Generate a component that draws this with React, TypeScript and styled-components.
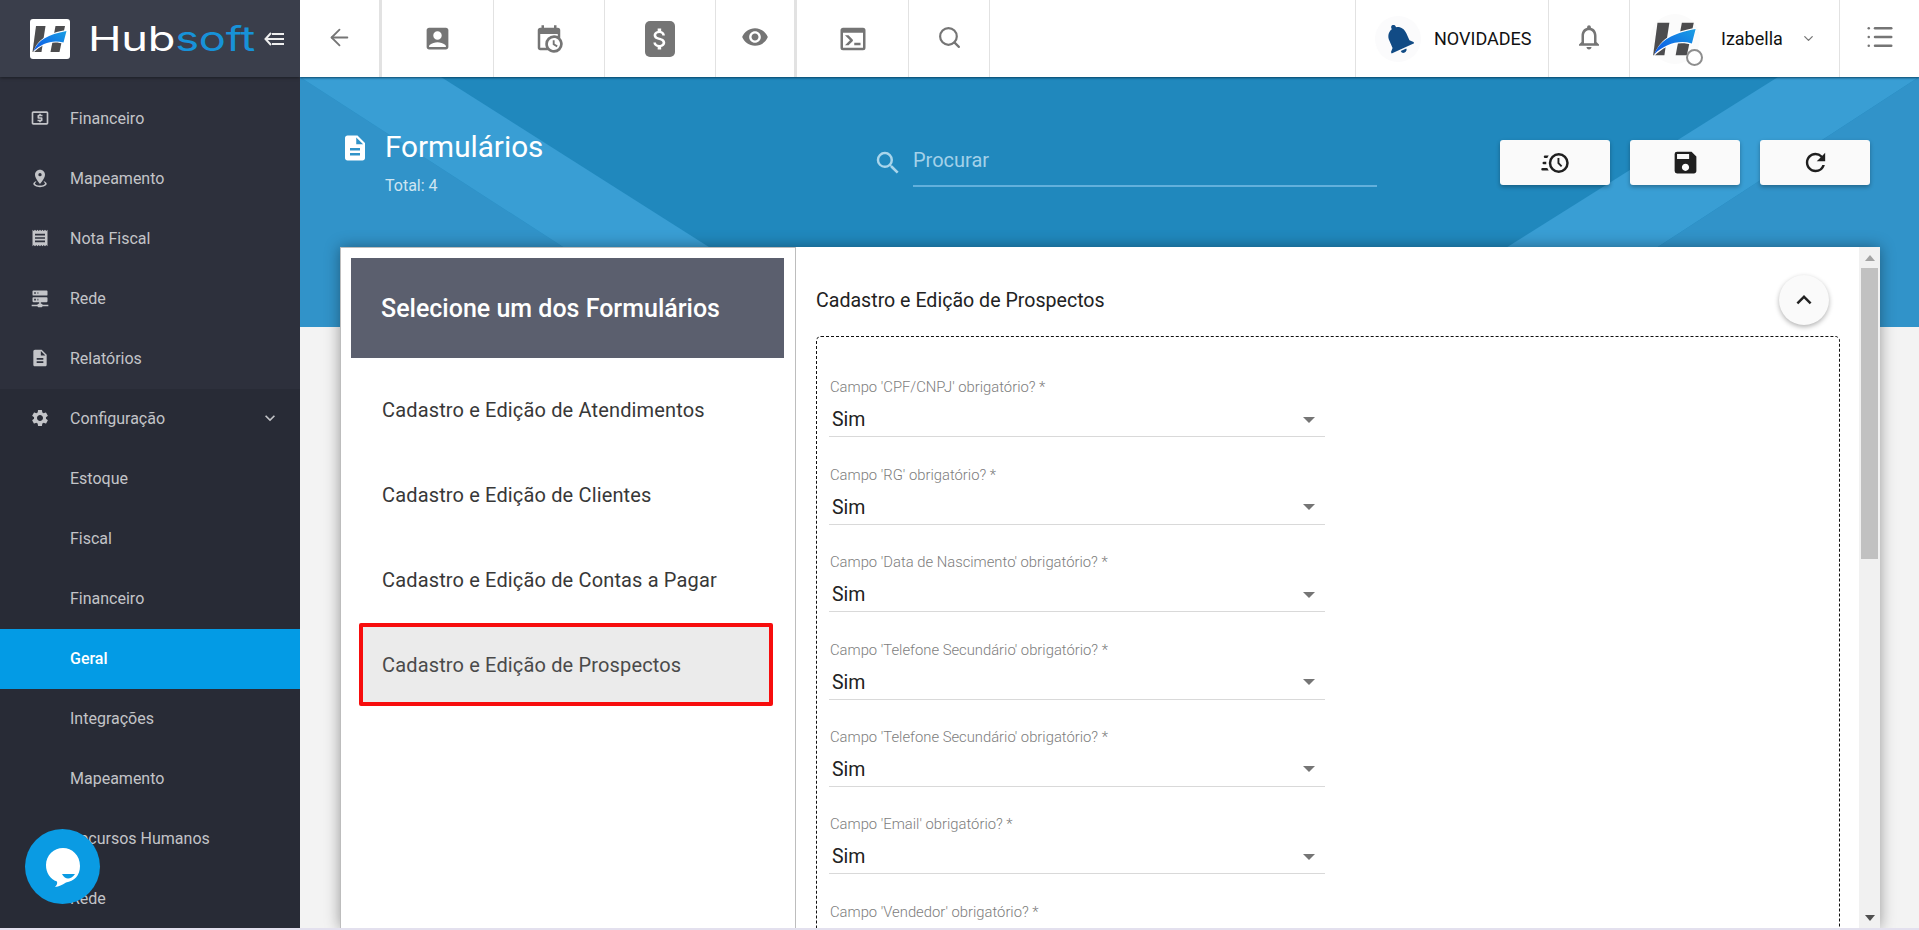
import React from "react";
import styled, { createGlobalStyle } from "styled-components";
import { ArrowLeft, ChevronDown, List, Search } from "lucide-react";
import {
  MdAccountBox,
  MdAttachMoney,
  MdDescription,
  MdExpandMore,
  MdKeyboardArrowUp,
  MdLocalAtm,
  MdNotifications,
  MdOutlineNotifications,
  MdReceipt,
  MdRefresh,
  MdSave,
  MdSearch,
  MdSettings,
  MdVisibility,
} from "react-icons/md";

const GlobalStyle = createGlobalStyle`
  html, body {
    margin: 0;
    height: 100%;
    overflow: hidden;
    background: #e3e0ee;
  }
  * {
    box-sizing: border-box;
  }
  #root {
    height: 928px;
    font-family: "Roboto", "Liberation Sans", sans-serif;
  }
`;

const Page = styled.div`
  display: flex;
  height: 928px;
  overflow: hidden;
  background: #f3f3f3;
`;

const Sidebar = styled.aside`
  width: 300px;
  flex-shrink: 0;
  background: #2d303c;
  overflow: hidden;
  position: relative;
  z-index: 3;
`;

const Brand = styled.div`
  height: 77px;
  background: #3a3e4b;
  box-shadow: 0 1px 3px rgba(0, 0, 0, 0.4);
  display: flex;
  align-items: center;
  padding: 0 0 0 30px;
`;

const LogoBox = styled.div`
  width: 40px;
  height: 40px;
  border-radius: 3px;
  background: #fff;
`;

const Wordmark = styled.div`
  width: 163px;
  margin-left: 18px;
  font-family: "Inter", sans-serif;
  font-size: 34px;
  font-weight: 400;
  line-height: 40px;
  color: #fff;
  white-space: nowrap;
  transform: scaleX(1.33);
  transform-origin: left center;
  letter-spacing: -0.2px;
`;

const WordmarkBlue = styled.span`
  color: #1792d8;
`;

const MenuToggle = styled.svg`
  width: 20px;
  height: 16px;
  margin-left: 13px;
  color: #eee;
`;

const Menu = styled.nav`
  padding-top: 12px;
`;

const SubMenu = styled.div`
  background: #282b36;
`;

const MenuItem = styled.div<{ $active?: boolean }>`
  height: 60px;
  display: flex;
  align-items: center;
  padding: 0 20px 2px 30px;
  font-size: 16px;
  font-weight: ${(p) => (p.$active ? 500 : 400)};
  color: ${(p) => (p.$active ? "#fff" : "#c3c4c8")};
  background: ${(p) => (p.$active ? "#039be5" : "transparent")};
`;

const MenuIcon = styled.span`
  width: 40px;
  display: flex;
  font-size: 20px;
  color: #c3c4c8;
`;

const MenuIndent = styled.span`
  width: 40px;
`;

const MenuChevron = styled.span`
  margin-left: auto;
  display: flex;
  font-size: 20px;
  color: #c3c4c8;
`;

const ChatButton = styled.div`
  position: absolute;
  left: 25px;
  top: 829px;
  width: 75px;
  height: 75px;
  border-radius: 50%;
  background: #0a9be3;
  display: flex;
  align-items: center;
  justify-content: center;
`;

const Main = styled.main`
  flex: 1;
  min-width: 0;
  display: flex;
  flex-direction: column;
  overflow: hidden;
`;

const TopBar = styled.header`
  height: 77px;
  flex-shrink: 0;
  display: flex;
  background: #fff;
  box-shadow: 0 1px 2px rgba(0, 50, 80, 0.8);
  position: relative;
  z-index: 2;
`;

const TopCell = styled.div<{ $width: number; $thick?: boolean; $pad?: number; $lift?: boolean; $last?: boolean }>`
  width: ${(p) => p.$width}px;
  flex-shrink: 0;
  display: flex;
  align-items: center;
  justify-content: ${(p) => (p.$pad === undefined ? "center" : "flex-start")};
  padding-left: ${(p) => p.$pad ?? 0}px;
  padding-bottom: ${(p) => (p.$lift ? 3 : 0)}px;
  border-right: ${(p) => (p.$last ? "0" : p.$thick ? "3px solid #e2e2e2" : "1px solid #e2e2e2")};
  color: #757575;
`;

const TopSpacer = styled.div`
  flex: 1;
  border-right: 1px solid #e2e2e2;
`;

const MoneyIcon = styled.div`
  width: 30px;
  height: 36px;
  border-radius: 5px;
  background: #757575;
  color: #fff;
  display: flex;
  align-items: center;
  justify-content: center;
  font-size: 28px;
`;

const BellCircle = styled.div`
  width: 46px;
  height: 46px;
  border-radius: 50%;
  background: #fbfbfc;
  display: flex;
  align-items: center;
  justify-content: center;
  color: #114b85;
  font-size: 37px;
`;

const BellTilt = styled.span`
  display: flex;
  transform: rotate(-24deg);
`;

const NewsLabel = styled.span`
  margin-left: 13px;
  font-size: 18px;
  font-weight: 400;
  color: #111;
`;

const Avatar = styled.div`
  width: 50px;
  height: 50px;
  border-radius: 50%;
  background: #fbfbfb;
  position: relative;
  display: flex;
  align-items: center;
  justify-content: center;
`;

const StatusRing = styled.span`
  position: absolute;
  right: -3px;
  bottom: -2px;
  width: 17px;
  height: 17px;
  border-radius: 50%;
  background: #fff;
  border: 2px solid #8e8e8e;
`;

const UserName = styled.span`
  margin-left: 21px;
  font-size: 18px;
  font-weight: 400;
  color: #111;
`;

const UserChevron = styled.span`
  margin-left: 18px;
  display: flex;
  color: #757575;
`;

const PageHeader = styled.section`
  height: 250px;
  flex-shrink: 0;
  background: #2088bd;
  position: relative;
  display: flex;
  align-items: flex-start;
  padding: 52px 49px 0 40px;
`;

const HeaderArt = styled.svg`
  position: absolute;
  left: 0;
  top: 0;
  width: 100%;
  height: 100%;
`;

const TitleBlock = styled.div`
  width: 533px;
  flex-shrink: 0;
  display: flex;
  gap: 15px;
  position: relative;
  color: #fff;
`;

const TitleIcon = styled.span`
  display: flex;
  font-size: 30px;
  height: 36px;
  align-items: center;
  margin-top: 1px;
`;

const PageTitle = styled.h1`
  margin: 0;
  font-size: 29.7px;
  font-weight: 400;
  line-height: 36px;
`;

const TotalText = styled.div`
  margin-top: 11px;
  font-size: 16px;
  line-height: 20px;
  color: #cfe5f1;
`;

const SearchBox = styled.div`
  display: flex;
  margin-top: 11px;
  gap: 10px;
  position: relative;
  color: #a9d5eb;
  font-size: 30px;
`;

const SearchIcon = styled.span`
  display: flex;
  height: 46px;
  align-items: center;
`;

const SearchField = styled.div`
  width: 464px;
  height: 47px;
  border-bottom: 2px solid #62b0dc;
  font-size: 20px;
  line-height: 41px;
  color: #a3d1e9;
`;

const Actions = styled.div`
  margin: 11px 0 0 auto;
  display: flex;
  gap: 20px;
  position: relative;
`;

const ActionButton = styled.div`
  width: 110px;
  height: 45px;
  border-radius: 3px;
  background: #fafafa;
  box-shadow: 0 2px 4px rgba(0, 0, 0, 0.3);
  color: #1f1f1f;
  display: flex;
  align-items: center;
  justify-content: center;
  font-size: 29px;
`;

const Card = styled.div`
  margin: -80px 39px 0 40px;
  flex: 1;
  min-height: 0;
  background: #fff;
  box-shadow: 0 0 14px rgba(0, 0, 0, 0.38);
  position: relative;
  display: flex;
  overflow: hidden;
`;

const FormList = styled.div`
  width: 456px;
  flex-shrink: 0;
  padding: 10px 11px 0 10px;
  border: 1px solid #bdbdbd;
  border-bottom: 0;
`;

const ListHeader = styled.div`
  height: 100px;
  display: flex;
  align-items: center;
  padding-left: 30px;
  background: #5b5f6e;
  color: #fff;
  font-size: 25px;
  font-weight: 500;
  margin-bottom: 10px;
`;

const ListItem = styled.div<{ $selected?: boolean }>`
  height: 83px;
  width: 414px;
  margin: 0 0 2px 8px;
  display: flex;
  align-items: center;
  padding-left: 19px;
  font-size: 20px;
  letter-spacing: 0.15px;
  color: ${(p) => (p.$selected ? "#4a4a4a" : "#383838")};
  background: ${(p) => (p.$selected ? "#ebebeb" : "transparent")};
  border: 4px solid ${(p) => (p.$selected ? "#f70d0d" : "transparent")};
  border-radius: 2px;
`;

const FormPanel = styled.div`
  flex: 1;
  min-width: 0;
  padding: 0 19px 0 20px;
`;

const PanelHead = styled.div`
  height: 89px;
  display: flex;
  align-items: flex-start;
  justify-content: space-between;
`;

const PanelTitle = styled.h2`
  margin: 42px 0 0;
  font-size: 19.6px;
  font-weight: 400;
  line-height: 24px;
  color: #222;
`;

const CollapseButton = styled.div`
  width: 50px;
  height: 50px;
  margin: 28px 11px 0 0;
  border-radius: 50%;
  background: #fafafa;
  box-shadow: 0 2px 5px rgba(0, 0, 0, 0.3);
  display: flex;
  align-items: center;
  justify-content: center;
  font-size: 30px;
  color: #222;
`;

const DashedBox = styled.div`
  border: 1px dashed #111;
  border-radius: 5px;
  padding: 13px 0 0 12px;
  height: 700px;
`;

const Field = styled.div`
  width: 496px;
  height: 87.4px;
  display: flex;
  flex-direction: column;
  justify-content: flex-end;
`;

const FieldLabel = styled.label`
  font-size: 14.8px;
  font-weight: 300;
  line-height: 20px;
  margin: 0 0 6px 1px;
  color: #7d7d7d;
`;

const FieldSelect = styled.div`
  height: 34px;
  display: flex;
  align-items: center;
  justify-content: space-between;
  padding: 0 10px 0 3px;
  border-bottom: 1px solid #d9d9d9;
  font-size: 19.5px;
  color: #222;
`;

const Caret = styled.span`
  width: 0;
  height: 0;
  border-left: 6px solid transparent;
  border-right: 6px solid transparent;
  border-top: 6px solid #757575;
`;

const ScrollBar = styled.div`
  width: 21px;
  flex-shrink: 0;
  display: flex;
  flex-direction: column;
  align-items: center;
  background: #f1f1f1;
`;

const ScrollUp = styled.span`
  margin: 8px 0 7px;
  border-left: 5px solid transparent;
  border-right: 5px solid transparent;
  border-bottom: 6px solid #a3a3a3;
`;

const ScrollThumb = styled.div`
  width: 17px;
  height: 291px;
  background: #c1c1c1;
`;

const ScrollDown = styled.span`
  margin: auto 0 7px;
  border-left: 5px solid transparent;
  border-right: 5px solid transparent;
  border-top: 6px solid #505050;
`;

const LogoMark = ({ size }: { size: number }) => (
  <svg width={size} height={size} viewBox="0 0 40 40">
    <defs>
      <linearGradient id="swoosh" x1="0" y1="1" x2="1" y2="0">
        <stop offset="0" stopColor="#0b55e6" />
        <stop offset="1" stopColor="#1a9fe3" />
      </linearGradient>
    </defs>
    <polygon points="6,7 15.5,7 11.5,33 2.5,33" fill="#4c4c4e" />
    <polygon points="25.5,7 35,7 29.5,33 20.5,33" fill="#4c4c4e" />
    <path d="M3 34C7 21 17 14 37 11L34 25C23 21 12 25 3 34Z" fill="#fff" />
    <path d="M3.5 32C8 21 18 15.5 36.5 12L33.5 23.5C22 20.5 12 24.5 3.5 32Z" fill="url(#swoosh)" />
  </svg>
);

const Mdi = ({ d, size = 30 }: { d: string; size?: number }) => (
  <svg width={size} height={size} viewBox="0 0 24 24" fill="currentColor">
    <path d={d} />
  </svg>
);

const calendarClock =
  "M15,13H16.5V15.82L18.94,17.23L18.19,18.53L15,16.69V13M19,8H5V19H9.67C9.24,18.09 9,17.07 9,16A7,7 0 0,1 16,9C17.07,9 18.09,9.24 19,9.67V8M5,21C3.89,21 3,20.1 3,19V5C3,3.89 3.89,3 5,3H6V1H8V3H16V1H18V3H19A2,2 0 0,1 21,5V11.1C22.24,12.36 23,14.09 23,16A7,7 0 0,1 16,23C14.09,23 12.36,22.24 11.1,21H5M16,11.15A4.85,4.85 0 0,0 11.15,16C11.15,18.68 13.32,20.85 16,20.85A4.85,4.85 0 0,0 20.85,16C20.85,13.32 18.68,11.15 16,11.15Z";
const consoleIcon =
  "M20,19V7H4V19H20M20,3A2,2 0 0,1 22,5V19A2,2 0 0,1 20,21H4A2,2 0 0,1 2,19V5C2,3.89 2.9,3 4,3H20M13,17V15H18V17H13M9.58,13L5.57,9H8.4L11.7,12.3C12.09,12.69 12.09,13.33 11.7,13.72L8.42,17H5.59L9.58,13Z";
const clockFast =
  "M15,4A8,8 0 0,1 23,12A8,8 0 0,1 15,20A8,8 0 0,1 7,12A8,8 0 0,1 15,4M15,6A6,6 0 0,0 9,12A6,6 0 0,0 15,18A6,6 0 0,0 21,12A6,6 0 0,0 15,6M14,8H15.5V11.78L17.83,14.11L16.77,15.17L14,12.4V8M2,18A1,1 0 0,1 1,17A1,1 0 0,1 2,16H5.83C6.14,16.71 6.54,17.38 7,18H2M3,13A1,1 0 0,1 2,12A1,1 0 0,1 3,11H5.05L5,12L5.05,13H3M4,8A1,1 0 0,1 3,7A1,1 0 0,1 4,6H7C6.54,6.62 6.14,7.29 5.83,8H4Z";
const markerRadius =
  "M12,2C15.31,2 18,4.66 18,7.95C18,12.41 12,19 12,19C12,19 6,12.41 6,7.95C6,4.66 8.69,2 12,2M12,6A2,2 0 0,0 10,8A2,2 0 0,0 12,10A2,2 0 0,0 14,8A2,2 0 0,0 12,6M20,19C20,21.21 16.42,23 12,23C7.58,23 4,21.21 4,19C4,17.71 5.22,16.56 7.11,15.83L7.75,16.74C6.67,17.19 6,17.81 6,18.5C6,19.88 8.69,21 12,21C15.31,21 18,19.88 18,18.5C18,17.81 17.33,17.19 16.25,16.74L16.89,15.83C18.78,16.56 20,17.71 20,19Z";
const serverNetwork =
  "M13,19H14A1,1 0 0,1 15,20H22V22H15A1,1 0 0,1 14,23H10A1,1 0 0,1 9,22H2V20H9A1,1 0 0,1 10,19H11V17H4A1,1 0 0,1 3,16V12A1,1 0 0,1 4,11H20A1,1 0 0,1 21,12V16A1,1 0 0,1 20,17H13V19M4,3H20A1,1 0 0,1 21,4V8A1,1 0 0,1 20,9H4A1,1 0 0,1 3,8V4A1,1 0 0,1 4,3M9,7H10V5H9V7M9,15H10V13H9V15M5,5V7H7V5H5M5,13V15H7V13H5Z";

const mainMenu = [
  { label: "Financeiro", icon: <MdLocalAtm /> },
  { label: "Mapeamento", icon: <Mdi d={markerRadius} size={20} /> },
  { label: "Nota Fiscal", icon: <MdReceipt /> },
  { label: "Rede", icon: <Mdi d={serverNetwork} size={20} /> },
  { label: "Relatórios", icon: <MdDescription /> },
];

const subMenu = ["Estoque", "Fiscal", "Financeiro", "Geral", "Integrações", "Mapeamento", "Recursos Humanos", "Rede"];

const forms = [
  "Cadastro e Edição de Atendimentos",
  "Cadastro e Edição de Clientes",
  "Cadastro e Edição de Contas a Pagar",
  "Cadastro e Edição de Prospectos",
];

const fields = ["CPF/CNPJ", "RG", "Data de Nascimento", "Telefone Secundário", "Telefone Secundário", "Email", "Vendedor"];

const App = () => {
  return (
    <Page>
      <GlobalStyle />
      <Sidebar>
        <Brand>
          <LogoBox>
            <LogoMark size={40} />
          </LogoBox>
          <Wordmark>
            Hub<WordmarkBlue>soft</WordmarkBlue>
          </Wordmark>
          <MenuToggle viewBox="0 0 20 16" fill="none" stroke="currentColor" strokeWidth="2">
            <path d="M7 2L1.5 8L7 14" />
            <path d="M2 8H20M8 3H20M8 13H20" />
          </MenuToggle>
        </Brand>
        <Menu>
          {mainMenu.map((item) => (
            <MenuItem key={item.label}>
              <MenuIcon>{item.icon}</MenuIcon>
              {item.label}
            </MenuItem>
          ))}
          <SubMenu>
            <MenuItem>
              <MenuIcon>
                <MdSettings />
              </MenuIcon>
              Configuração
              <MenuChevron>
                <MdExpandMore />
              </MenuChevron>
            </MenuItem>
            {subMenu.map((label) => (
              <MenuItem key={label} $active={label === "Geral"}>
                <MenuIndent />
                {label}
              </MenuItem>
            ))}
          </SubMenu>
        </Menu>
        <ChatButton>
          <svg width="38" height="42" viewBox="0 0 38 42">
            <path d="M19 2C28 2 36 9 36 20C36 30 30 35 22 36.500C18 39 15 40.500 11 41C13 39 13.500 37.500 13 35.500C6 33 2 27 2 19C2 9 10 2 19 2Z" fill="#fff" />
            <path d="M18 28H31C29 31 26 32.500 24 32.500C22 32.500 19.500 31 18 28Z" fill="#0a9be3" />
          </svg>
        </ChatButton>
      </Sidebar>
      <Main>
        <TopBar>
          <TopCell $width={82} $thick $lift>
            <ArrowLeft size={27} strokeWidth={1.6} />
          </TopCell>
          <TopCell $width={112}>
            <MdAccountBox size={29} />
          </TopCell>
          <TopCell $width={111}>
            <Mdi d={calendarClock} />
          </TopCell>
          <TopCell $width={111}>
            <MoneyIcon>
              <MdAttachMoney />
            </MoneyIcon>
          </TopCell>
          <TopCell $width={81} $thick $lift>
            <MdVisibility size={28} />
          </TopCell>
          <TopCell $width={112}>
            <Mdi d={consoleIcon} />
          </TopCell>
          <TopCell $width={81} $lift>
            <Search size={25} strokeWidth={2.1} />
          </TopCell>
          <TopSpacer />
          <TopCell $width={193} $pad={19}>
            <BellCircle>
              <BellTilt>
                <MdNotifications />
              </BellTilt>
            </BellCircle>
            <NewsLabel>NOVIDADES</NewsLabel>
          </TopCell>
          <TopCell $width={81} $lift>
            <MdOutlineNotifications size={30} />
          </TopCell>
          <TopCell $width={210} $pad={20}>
            <Avatar>
              <LogoMark size={50} />
              <StatusRing />
            </Avatar>
            <UserName>Izabella</UserName>
            <UserChevron>
              <ChevronDown size={15} />
            </UserChevron>
          </TopCell>
          <TopCell $width={79} $lift $last>
            <List size={30} strokeWidth={2} />
          </TopCell>
        </TopBar>
        <PageHeader>
          <HeaderArt viewBox="0 0 1619 250" preserveAspectRatio="none">
            <polygon points="0,0 387,250 0,250" fill="#3193c9" />
            <polygon points="0,0 141,0 535,250 387,250" fill="#399ed4" />
            <polygon points="1478,0 1619,0 1235,250 1080,250" fill="#399ed4" />
            <polygon points="1619,0 1619,250 1235,250" fill="#3193c9" />
          </HeaderArt>
          <TitleBlock>
            <TitleIcon>
              <MdDescription />
            </TitleIcon>
            <div>
              <PageTitle>Formulários</PageTitle>
              <TotalText>Total: 4</TotalText>
            </div>
          </TitleBlock>
          <SearchBox>
            <SearchIcon>
              <MdSearch />
            </SearchIcon>
            <SearchField>Procurar</SearchField>
          </SearchBox>
          <Actions>
            <ActionButton>
              <Mdi d={clockFast} />
            </ActionButton>
            <ActionButton>
              <MdSave />
            </ActionButton>
            <ActionButton>
              <MdRefresh />
            </ActionButton>
          </Actions>
        </PageHeader>
        <Card>
          <FormList>
            <ListHeader>Selecione um dos Formulários</ListHeader>
            {forms.map((form, i) => (
              <ListItem key={form} $selected={i === forms.length - 1}>
                {form}
              </ListItem>
            ))}
          </FormList>
          <FormPanel>
            <PanelHead>
              <PanelTitle>Cadastro e Edição de Prospectos</PanelTitle>
              <CollapseButton>
                <MdKeyboardArrowUp />
              </CollapseButton>
            </PanelHead>
            <DashedBox>
              {fields.map((field, i) => (
                <Field key={i}>
                  <FieldLabel>Campo '{field}' obrigatório? *</FieldLabel>
                  <FieldSelect>
                    Sim
                    <Caret />
                  </FieldSelect>
                </Field>
              ))}
            </DashedBox>
          </FormPanel>
          <ScrollBar>
            <ScrollUp />
            <ScrollThumb />
            <ScrollDown />
          </ScrollBar>
        </Card>
      </Main>
    </Page>
  );
};

export default App;
